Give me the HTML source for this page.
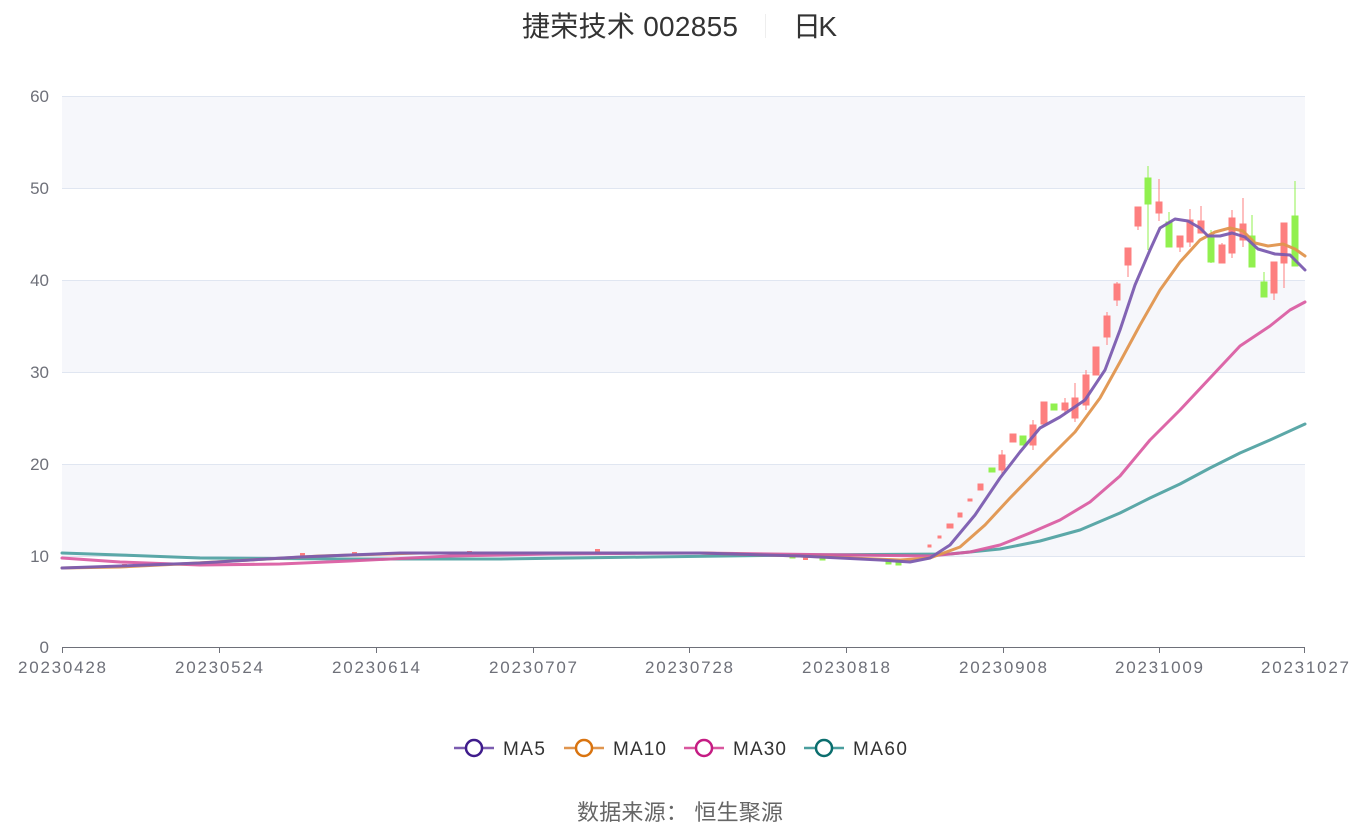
<!DOCTYPE html>
<html><head><meta charset="utf-8"><style>
body{margin:0;width:1360px;height:828px;background:#fff;overflow:hidden;font-family:"Liberation Sans","Noto Sans CJK SC",sans-serif}
</style></head><body>
<svg width="1360" height="828" xmlns="http://www.w3.org/2000/svg" style="position:absolute;left:0;top:0">
<rect x="62" y="96" width="1243" height="92" fill="#f6f7fb"/>
<rect x="62" y="280" width="1243" height="92" fill="#f6f7fb"/>
<rect x="62" y="464" width="1243" height="92" fill="#f6f7fb"/>
<g stroke="#e0e6f1" stroke-width="1">
<line x1="62" y1="96.5" x2="1305" y2="96.5"/><line x1="62" y1="188.5" x2="1305" y2="188.5"/>
<line x1="62" y1="280.5" x2="1305" y2="280.5"/><line x1="62" y1="372.5" x2="1305" y2="372.5"/>
<line x1="62" y1="464.5" x2="1305" y2="464.5"/><line x1="62" y1="556.5" x2="1305" y2="556.5"/>
</g>
<line x1="62" y1="647.5" x2="1305" y2="647.5" stroke="#6e7079"/>
<g stroke="#6e7079"><line x1="62.5" y1="647" x2="62.5" y2="653"/><line x1="219.5" y1="647" x2="219.5" y2="653"/><line x1="376.5" y1="647" x2="376.5" y2="653"/><line x1="533.5" y1="647" x2="533.5" y2="653"/><line x1="689.5" y1="647" x2="689.5" y2="653"/><line x1="846.5" y1="647" x2="846.5" y2="653"/><line x1="1003.5" y1="647" x2="1003.5" y2="653"/><line x1="1159.5" y1="647" x2="1159.5" y2="653"/><line x1="1304.5" y1="647" x2="1304.5" y2="653"/></g>
<g font-size="17" fill="#6e7079" text-anchor="end">
<text x="49" y="102">60</text><text x="49" y="194">50</text><text x="49" y="286">40</text><text x="49" y="378">30</text><text x="49" y="470">20</text><text x="49" y="562">10</text><text x="49" y="653">0</text></g>
<g font-size="17" fill="#6e7079" text-anchor="middle" textLength="88">
<text x="62" y="673" textLength="88">20230428</text><text x="219" y="673" textLength="88">20230524</text><text x="376" y="673" textLength="88">20230614</text><text x="533" y="673" textLength="88">20230707</text><text x="689" y="673" textLength="88">20230728</text><text x="846" y="673" textLength="88">20230818</text><text x="1003" y="673" textLength="88">20230908</text><text x="1159" y="673" textLength="88">20231009</text><text x="1305" y="673" textLength="88">20231027</text></g>
<!-- candles -->
<g stroke-width="1">
<g fill="#fd7f7f" stroke="#fd7f7f">
<rect x="928" y="545" width="3" height="2"/><rect x="938" y="536" width="3" height="2"/><rect x="947" y="524" width="6" height="4"/><rect x="958" y="513" width="4" height="4"/><rect x="968" y="499" width="4" height="2"/><rect x="978" y="484" width="5" height="6"/>
<rect x="999" y="455" width="6" height="15"/><line x1="1002" y1="450" x2="1002" y2="474"/>
<rect x="1010" y="434" width="6" height="8"/>
<rect x="1030" y="425" width="6" height="20"/><line x1="1033" y1="420" x2="1033" y2="450"/>
<rect x="1041" y="402" width="6" height="22"/>
<rect x="1062" y="403" width="6" height="7"/><line x1="1065" y1="398" x2="1065" y2="415"/>
<rect x="1072" y="398" width="6" height="20"/><line x1="1075" y1="383" x2="1075" y2="422"/>
<rect x="1083" y="375" width="6" height="30"/><line x1="1086" y1="370" x2="1086" y2="410"/>
<rect x="1093" y="347" width="6" height="28"/>
<rect x="1104" y="316" width="6" height="21"/><line x1="1107" y1="312" x2="1107" y2="345"/>
<rect x="1114" y="284" width="6" height="16"/><line x1="1117" y1="282" x2="1117" y2="306"/>
<rect x="1125" y="248" width="6" height="17"/><line x1="1128" y1="248" x2="1128" y2="277"/>
<rect x="1135" y="207" width="6" height="19"/><line x1="1138" y1="207" x2="1138" y2="230"/>
<rect x="1156" y="202" width="6" height="11"/><line x1="1159" y1="179" x2="1159" y2="221"/>
<rect x="1177" y="236" width="6" height="11"/><line x1="1180" y1="236" x2="1180" y2="252"/>
<rect x="1187" y="220" width="6" height="22"/><line x1="1190" y1="209" x2="1190" y2="247"/>
<rect x="1198" y="221" width="6" height="12"/><line x1="1201" y1="206" x2="1201" y2="233"/>
<rect x="1219" y="245" width="6" height="18"/><line x1="1222" y1="243" x2="1222" y2="263"/>
<rect x="1229" y="218" width="6" height="35"/><line x1="1232" y1="210" x2="1232" y2="258"/>
<rect x="1240" y="224" width="6" height="16"/><line x1="1243" y1="198" x2="1243" y2="247"/>
<rect x="1271" y="262" width="6" height="31"/><line x1="1274" y1="262" x2="1274" y2="300"/>
<rect x="1281" y="223" width="6" height="40"/><line x1="1284" y1="223" x2="1284" y2="288"/>
</g>
<g fill="#91f04f" stroke="#91f04f">
<rect x="989" y="468" width="6" height="4"/>
<rect x="1020" y="436" width="6" height="9"/>
<rect x="1051" y="404" width="6" height="6"/>
<rect x="1145" y="178" width="6" height="26"/><line x1="1148" y1="166" x2="1148" y2="250"/>
<rect x="1166" y="222" width="6" height="25"/><line x1="1169" y1="212" x2="1169" y2="247"/>
<rect x="1208" y="238" width="6" height="24"/><line x1="1211" y1="230" x2="1211" y2="263"/>
<rect x="1249" y="236" width="6" height="31"/><line x1="1252" y1="215" x2="1252" y2="267"/>
<rect x="1261" y="282" width="6" height="15"/><line x1="1264" y1="272" x2="1264" y2="297"/>
<rect x="1292" y="216" width="6" height="50"/><line x1="1295" y1="181" x2="1295" y2="266"/>
<rect x="790" y="556" width="5" height="2"/><rect x="820" y="557" width="5" height="3"/><rect x="886" y="561" width="5" height="3"/><rect x="896" y="562" width="5" height="3"/>
</g>
<g fill="#fd7f7f"><rect x="122" y="564" width="5" height="2"/><rect x="270" y="557" width="5" height="2"/><rect x="300" y="553" width="5" height="3"/><rect x="352" y="552" width="5" height="3"/><rect x="467" y="551" width="5" height="3"/><rect x="595" y="549" width="5" height="3"/><rect x="803" y="557" width="5" height="3"/></g>
</g>
<!-- MAs -->
<g fill="none" stroke-width="3" stroke-linejoin="round" stroke-linecap="round">
<polyline stroke="#4a9e9e" opacity="0.9" points="62,553 120,555 200,558 350,559 500,559 650,557 800,555 950,554 1000,549 1040,541 1080,530 1120,513 1150,498 1180,484 1210,468 1240,453 1270,440 1305,424"/>
<polyline stroke="#d9579f" opacity="0.9" points="62,558 120,562 200,565 280,564 350,561 450,556 550,554 700,553 850,555 930,556 970,552 1000,545 1030,533 1060,520 1090,502 1120,476 1150,440 1180,410 1210,378 1240,346 1270,326 1290,310 1305,302"/>
<polyline stroke="#e0954e" opacity="0.95" points="62,568 120,567 180,564 250,560 320,556 420,553 550,553 700,553 800,556 900,560 930,558 960,547 985,525 1010,498 1045,462 1075,432 1100,398 1120,362 1140,325 1160,290 1180,262 1200,240 1215,232 1230,228 1243,231 1255,243 1268,246 1283,244 1295,249 1305,256"/>
<polyline stroke="#7b5cb0" opacity="0.95" points="62,568 120,566 200,563 300,557 400,553 550,553 700,553 800,556 880,560 910,562 930,558 950,545 975,515 1000,478 1020,452 1040,428 1060,417 1085,400 1105,370 1120,330 1135,285 1150,250 1160,228 1175,219 1188,221 1200,228 1208,236 1220,236 1232,233 1245,237 1258,249 1275,254 1290,255 1305,270"/>
</g>
<!-- legend -->
<g stroke-width="2.5">
<line x1="454" y1="748" x2="494" y2="748" stroke="#7b5cb0"/><circle cx="474" cy="748" r="8" fill="#fff" stroke="#3f1c8c"/>
<line x1="564" y1="748" x2="604" y2="748" stroke="#e0954e"/><circle cx="584" cy="748" r="8" fill="#fff" stroke="#d97410"/>
<line x1="684" y1="748" x2="724" y2="748" stroke="#d9579f"/><circle cx="704" cy="748" r="8" fill="#fff" stroke="#c51c83"/>
<line x1="804" y1="748" x2="844" y2="748" stroke="#4a9e9e"/><circle cx="824" cy="748" r="8" fill="#fff" stroke="#0b6e6e"/>
</g>
<g font-size="19" fill="#333"><text x="503" y="755" textLength="42">MA5</text><text x="613" y="755" textLength="53">MA10</text><text x="733" y="755" textLength="53">MA30</text><text x="853" y="755" textLength="54">MA60</text></g>
<text x="522" y="36" font-size="28" fill="#333" textLength="216">捷荣技术 002855</text>
<line x1="765.5" y1="14" x2="765.5" y2="38" stroke="#eee"/>
<text x="793" y="36" font-size="28" fill="#333" textLength="44">日K</text>
<text x="577" y="820" font-size="22" fill="#666" textLength="206">数据来源：  恒生聚源</text>
</svg>
</body></html>
